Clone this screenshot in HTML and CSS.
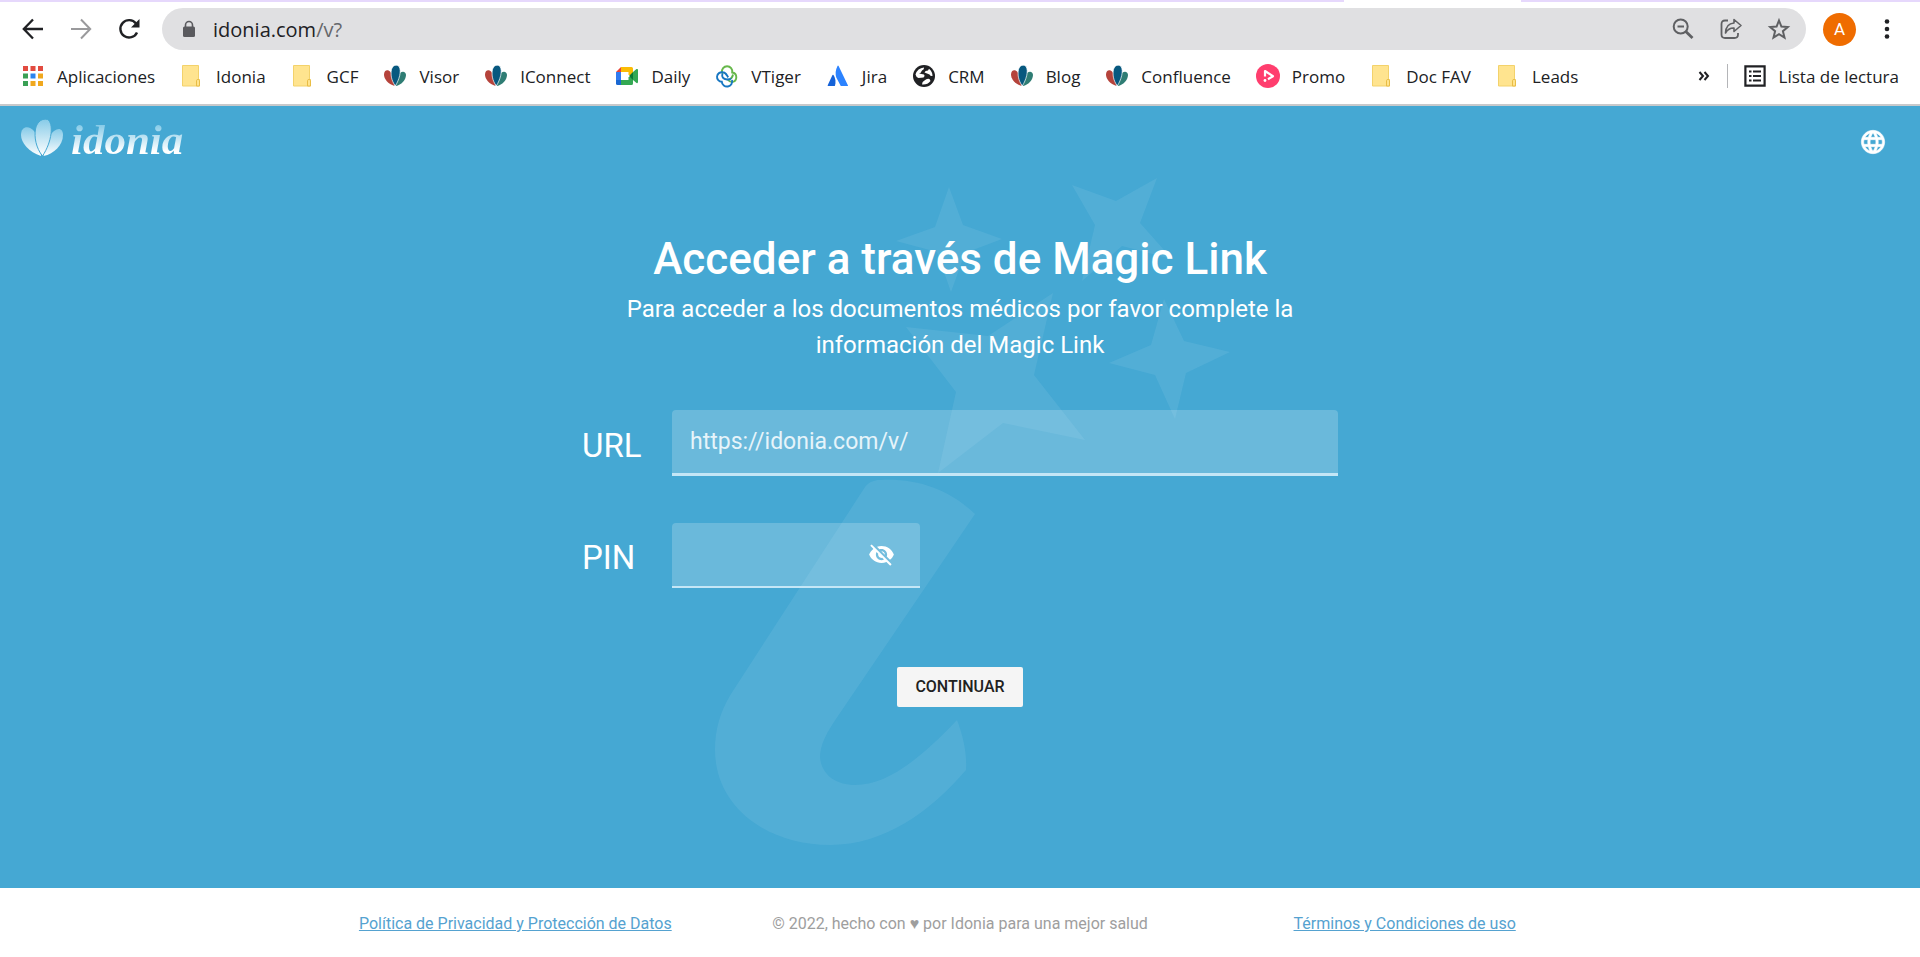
FILE: index.html
```html
<!DOCTYPE html>
<html lang="es">
<head>
<meta charset="utf-8">
<meta name="viewport" content="width=device-width, initial-scale=1">
<title>Idonia - Magic Link</title>
<link rel="stylesheet" href="styles.css">
</head>
<body>
<svg class="defs" aria-hidden="true">
  <defs>
    <linearGradient id="petal" x1="0" y1="0" x2="0" y2="1">
      <stop offset="0" stop-color="#86cbe8"/><stop offset="1" stop-color="#ffffff"/>
    </linearGradient>
    <linearGradient id="vt" x1="0" y1="1" x2="1" y2="0">
      <stop offset="0.4" stop-color="#1877c2"/><stop offset="0.6" stop-color="#5cb548"/>
    </linearGradient>
    <symbol id="folder" viewBox="0 0 24 24">
      <path d="M2.500 1.500h16v14h1v6.500h-17z" fill="#ffe48f" stroke="#f3d26b"/>
      <path d="M16.500 22v-5.500q0-1 1.500-1t1.500 1v5.500z" fill="#ffe48f" stroke="#e9bd45"/>
    </symbol>
    <symbol id="tulip" viewBox="0 0 24 24">
      <path d="M11.500 22C5 20 1 15 1 10.500C1 6 5 5 7.500 8C10 11.500 11.500 17 11.500 22z" fill="#b5433b"/>
      <path d="M13 22C12 17 14 12 17 9C20 6.500 23 8 23 11C23 16 18 21 13 22z" fill="#2f7d74"/>
      <path d="M12.300 22C8 16 7.500 10 8.500 5.500C9.500 1 14 0 16 2.500C19 7 16 16 12.300 22z" fill="#07587f" stroke="#fff" stroke-width=".7"/>
    </symbol>
  </defs>
</svg>

<div class="tabstrip"><span class="tab"></span></div>

<div class="toolbar">
  <button class="icon-btn" aria-label="Atrás"><svg viewBox="0 0 24 24"><path d="M22 12H3M12 2.500L2.800 12L12 21.500" fill="none" stroke="#202124" stroke-width="2.300"/></svg></button>
  <button class="icon-btn" aria-label="Adelante"><svg viewBox="0 0 24 24"><path d="M2 12h19M12 2.500L21.200 12L12 21.500" fill="none" stroke="#9a9a9c" stroke-width="2"/></svg></button>
  <button class="icon-btn" aria-label="Recargar"><svg viewBox="0 0 24 24"><path d="M20 15.500A8.700 8.700 0 1 1 19 6.500" fill="none" stroke="#202124" stroke-width="2.400"/><path d="M22.500 2v8.500H14z" fill="#202124"/></svg></button>
  <div class="omnibox">
    <svg class="lock" viewBox="0 0 14 18"><path d="M3.500 7V5a3.500 3.500 0 0 1 7 0v2" fill="none" stroke="#5a5a5e" stroke-width="1.600"/><rect x="1" y="6.500" width="12" height="10.500" rx="1.500" fill="#5a5a5e"/></svg>
    <span class="address">idonia.com<span class="address-path">/v?</span></span>
    <button class="icon-btn" aria-label="Zoom"><svg viewBox="0 0 24 24" fill="none" stroke="#5f6063" stroke-width="2"><circle cx="9.700" cy="9.500" r="7"/><path d="M6.500 9.500h6.500"/><path d="M14.800 14.500L21.500 21" stroke-width="2.800"/></svg></button>
    <button class="icon-btn" aria-label="Compartir"><svg viewBox="0 0 24 24" fill="none" stroke="#5f6063" stroke-width="1.800"><path d="M9 3.500H6Q2.500 3.500 2.500 7v10.500Q2.500 21 6 21h9.500Q19 21 19 17.500V16"/><path d="M15 2.500L22 8.500L15 14.500V11Q9.500 10.800 6.500 16Q7 6.500 15 6z" stroke-linejoin="round" stroke-width="1.600"/></svg></button>
    <button class="icon-btn" aria-label="Añadir a marcadores"><svg viewBox="0 0 24 24"><path d="M12 3.500L14.400 9.500L20.800 10L15.900 14.200L17.500 20.500L12 17.100L6.500 20.500L8.100 14.200L3.200 10L9.600 9.500z" fill="none" stroke="#5f6063" stroke-width="2"/></svg></button>
  </div>
  <button class="avatar" aria-label="Perfil">A</button>
  <button class="icon-btn menu" aria-label="Menú"><svg viewBox="0 0 24 24" fill="#202124"><circle cx="12" cy="4.500" r="2.300"/><circle cx="12" cy="12" r="2.300"/><circle cx="12" cy="19.500" r="2.300"/></svg></button>
</div>

<nav class="bookmarks" aria-label="Marcadores">
  <a class="bookmark" href="#"><svg viewBox="0 0 24 24"><path d="M2 2h5v5H2zM9.500 2h5v5h-5zM17 2h5v5h-5z" fill="#e24b40"/><path d="M2 9.500h5v5H2zM2 17h5v5H2z" fill="#3aa055"/><path d="M9.500 9.500h5v5h-5z" fill="#2b84ee"/><path d="M17 9.500h5v5h-5zM9.500 17h5v5h-5zM17 17h5v5h-5z" fill="#f0a81e"/></svg>Aplicaciones</a>
  <a class="bookmark" href="#"><svg><use href="#folder"/></svg>Idonia</a>
  <a class="bookmark" href="#"><svg><use href="#folder"/></svg>GCF</a>
  <a class="bookmark" href="#"><svg><use href="#tulip"/></svg>Visor</a>
  <a class="bookmark" href="#"><svg><use href="#tulip"/></svg>IConnect</a>
  <a class="bookmark" href="#"><svg viewBox="0 0 24 24"><path d="M1 8l5-5v5z" fill="#ea4335"/><path d="M6 3h10.500Q18 3 18 4.500V11h-4.500V8H6z" fill="#fbbc04"/><path d="M1 8h5v8H1z" fill="#2f7bf0"/><path d="M1 16h5v5H2.500Q1 21 1 19.500z" fill="#1967d2"/><path d="M6 16h7.500v-3H18v6.500Q18 21 16.500 21H6z" fill="#34a853"/><path d="M14 12l4-4v8z" fill="#0b7a35"/><path d="M18 8l3.500-3Q23 4.500 23 6v12q0 1.500-1.500 1L18 16z" fill="#34a853"/></svg>Daily</a>
  <a class="bookmark" href="#"><svg viewBox="0 0 24 24" fill="none" stroke-width="1.900"><path d="M7 8.500a5.200 5.200 0 1 1 10.200 0a4.800 4.800 0 0 1 0 9.500c-2.500 0-3.500-1-5-3" stroke="#67b84b"/><path d="M17 16a5.200 5.200 0 1 1-10.200 1.800a4.800 4.800 0 1 1 1-9.500c3.200 0 3.800 3 5.400 5" stroke="#1877c2"/><path d="M7.500 9q-1.500 6 4.500 6.500q5 .5 6-5" stroke="url(#vt)"/></svg>VTiger</a>
  <a class="bookmark" href="#"><svg viewBox="0 0 24 24"><path d="M11.500 2Q12 1 12.600 2L22 21.500Q22 22 21.500 22H15.200Q14.700 22 14.500 21.500L10.300 13.500Q8.500 8 11.500 2z" fill="#2c83ff"/><path d="M6.500 11Q7 10.300 7.500 11Q10.500 15.500 9 21.500Q8.800 22 8.300 22H2Q1.500 22 1.700 21.300z" fill="#1562d8"/></svg>Jira</a>
  <a class="bookmark" href="#"><svg viewBox="0 0 24 24"><circle cx="12" cy="12" r="11" fill="#202124"/><path d="M3.500 10.500Q5.500 4 12 3.500Q12.500 5.500 10 6.500Q9 9 7 9.500L12 10.500Q13.500 12 11.500 13.500L6.500 14Q4 13 3.500 10.500zM12.500 8.500Q13 6.500 16 6.500L17 4.800Q20.500 7.500 20.500 12Q18.500 12.500 17.500 10.500zM10 20.500Q10 17.500 12.500 16.500Q15 14 17.500 15L18.500 17Q15.500 21 10 20.500z" fill="#fff"/></svg>CRM</a>
  <a class="bookmark" href="#"><svg><use href="#tulip"/></svg>Blog</a>
  <a class="bookmark" href="#"><svg><use href="#tulip"/></svg>Confluence</a>
  <a class="bookmark" href="#"><svg viewBox="0 0 24 24"><circle cx="12" cy="12" r="12" fill="#ff3e6e"/><path d="M9 12.500V7l8 5.200l-5 3" fill="none" stroke="#fff" stroke-width="2.200" stroke-linejoin="round"/><circle cx="9" cy="16.500" r="1.400" fill="#fff"/></svg>Promo</a>
  <a class="bookmark" href="#"><svg><use href="#folder"/></svg>Doc FAV</a>
  <a class="bookmark" href="#"><svg><use href="#folder"/></svg>Leads</a>
  <button class="more" aria-label="Más marcadores"><svg viewBox="0 0 12 12"><path d="M1.500 2l3.500 4l-3.500 4M6.500 2l3.500 4l-3.500 4" fill="none" stroke="#202124" stroke-width="2"/></svg></button>
  <a class="bookmark reading" href="#"><svg viewBox="0 0 24 24"><path d="M2.400 2.400h19.200v19.200H2.400z" fill="none" stroke="#202124" stroke-width="2.200"/><path d="M6 6.500h2.500v2H6zM10 6.500h8v2h-8zM6 11h2.500v2H6zM10 11h8v2h-8zM6 15.500h2.500v2H6zM10 15.500h8v2h-8z" fill="#202124"/></svg>Lista de lectura</a>
</nav>

<main class="page">
  <svg class="watermark" viewBox="715 178 516 668" aria-hidden="true">
    <path d="M949 187L963 225L1002 239L965 253L951 292L937 252L896 241L935 227z"/>
    <path d="M1072 185L1116 201L1157 178L1140 223L1172 259L1122 246L1082 281L1095 225z"/>
    <path d="M906 327L988 336L1053 293L1034 375L1085 440L1003 423L938 473L956 392z"/>
    <path d="M1164 299L1184 341L1230 352L1186 373L1175 419L1155 375L1109 363L1151 345z"/>
    <path d="M865 487C869 482 874 480 880 480C918 478 950 490 975 514L840 713C826 733 820 745 820 758C822 775 836 785 855 785C888 785 921 758 957 720C963 736 967 752 966 770C930 812 884 845 830 845C766 845 715 806 715 750C715 730 720 712 731 694z"/>
  </svg>
  <header class="page-header">
    <a class="logo" href="#" aria-label="idonia">
      <svg class="logo-mark" viewBox="0 0 44 40" fill="url(#petal)"><path d="M21 38C9 34 1 25 1 17C1 8 9 7 14 13C19 20 20 29 21 38z"/><path d="M23.500 38C24 28 28 18 34 13C39 9 43 11 43 17C43 27 34 36 23.500 38z"/><path d="M22.500 38C16 30 14 19 15.500 11C17 3 23 0 27.500 1.500C34 5 32 24 22.500 38z" stroke="#45a8d3"/></svg>
      <span class="logo-name">idonia</span>
    </a>
    <button class="language" aria-label="Idioma"><svg viewBox="0 0 24 24" fill="#fff"><path d="M11.990 2C6.470 2 2 6.480 2 12s4.470 10 9.990 10C17.520 22 22 17.520 22 12S17.520 2 11.990 2zm6.930 6h-2.950c-.32-1.250-.78-2.450-1.380-3.560 1.840.63 3.370 1.910 4.330 3.560zM12 4.040c.83 1.200 1.480 2.530 1.910 3.960h-3.820c.43-1.430 1.080-2.760 1.910-3.960zM4.260 14C4.100 13.360 4 12.690 4 12s.1-1.360.26-2h3.380c-.08.66-.14 1.320-.14 2s.06 1.340.14 2H4.260zm.82 2h2.950c.32 1.250.78 2.450 1.380 3.560-1.840-.63-3.370-1.900-4.330-3.560zm2.950-8H5.080c.96-1.660 2.490-2.930 4.330-3.560C8.810 5.550 8.350 6.750 8.030 8zM12 19.960c-.83-1.200-1.480-2.530-1.910-3.960h3.820c-.43 1.430-1.080 2.760-1.910 3.960zM14.340 14H9.660c-.09-.66-.16-1.320-.16-2s.07-1.350.16-2h4.680c.09.650.16 1.320.16 2s-.07 1.340-.16 2zm.25 5.560c.6-1.110 1.060-2.310 1.380-3.560h2.950c-.96 1.650-2.490 2.930-4.330 3.560zM16.360 14c.08-.66.14-1.320.14-2s-.06-1.340-.14-2h3.380c.16.640.26 1.310.26 2s-.1 1.360-.26 2h-3.380z" stroke="#fff" stroke-width=".5"/></svg></button>
  </header>
  <form class="access">
    <h1 class="title">Acceder a través de Magic Link</h1>
    <p class="subtitle">Para acceder a los documentos médicos por favor complete la información del Magic Link</p>
    <div class="row">
      <label class="label" for="url">URL</label>
      <input class="field field-url" id="url" type="text" placeholder="https://idonia.com/v/">
    </div>
    <div class="row">
      <label class="label" for="pin">PIN</label>
      <div class="field field-pin">
        <input class="pin-input" id="pin" type="password">
        <button class="reveal" type="button" aria-label="Mostrar PIN"><svg viewBox="0 0 24 24" fill="#fff"><path d="M12 7c2.760 0 5 2.240 5 5 0 .65-.13 1.260-.36 1.830l2.920 2.920c1.510-1.260 2.700-2.890 3.430-4.750-1.730-4.390-6-7.500-11-7.500-1.400 0-2.740.25-3.980.7l2.160 2.160C10.740 7.130 11.350 7 12 7zM2 4.270l2.280 2.280.46.460C3.080 8.300 1.780 10.020 1 12c1.730 4.390 6 7.500 11 7.500 1.550 0 3.030-.3 4.380-.84l.42.42L19.730 22 21 20.730 3.270 3 2 4.270zM7.530 9.800l1.550 1.550c-.05.21-.08.43-.08.650 0 1.660 1.340 3 3 3 .22 0 .44-.03.650-.08l1.550 1.550c-.67.33-1.410.53-2.200.53-2.760 0-5-2.240-5-5 0-.79.2-1.530.53-2.200zm4.310-.78l3.150 3.150.02-.16c0-1.660-1.340-3-3-3l-.17.010z"/></svg></button>
      </div>
    </div>
    <button class="submit" type="submit">CONTINUAR</button>
  </form>
</main>

<footer class="footer">
  <div class="footer-inner">
    <a class="footer-link" href="#">Política de Privacidad y Protección de Datos</a>
    <span>© 2022, hecho con ♥ por Idonia para una mejor salud</span>
    <a class="footer-link" href="#">Términos y Condiciones de uso</a>
  </div>
</footer>
</body>
</html>
```
FILE: styles.css
```css
* { box-sizing: border-box; }

body {
  margin: 0;
  min-height: 100vh;
  display: flex;
  flex-direction: column;
  background: #fff;
  font-family: Roboto, "Liberation Sans", sans-serif;
}

button {
  padding: 0;
  border: 0;
  background: none;
  font: inherit;
  cursor: pointer;
}

svg { display: block; }
.defs { position: absolute; width: 0; height: 0; }

/* Browser frame */
.tabstrip {
  height: 2px;
  padding-left: 70%;
  background: #e6d8fc;
}
.tab {
  display: block;
  width: 177px;
  height: 2px;
  background: #fff;
}

.toolbar {
  display: flex;
  align-items: center;
  gap: 24px;
  padding: 6px 21px 0;
}
.icon-btn, .icon-btn svg { width: 24px; height: 24px; }
.icon-btn { flex: none; }

.omnibox {
  flex: 1;
  display: flex;
  align-items: center;
  gap: 24px;
  height: 42px;
  margin: 0 -7px 0 -3px;
  padding: 0 15px 0 20px;
  border-radius: 21px;
  background: #e0e0e2;
}
.lock { width: 14px; height: 18px; }
.address {
  flex: 1;
  margin-left: -7px;
  font: 20px "Open Sans", "Noto Sans", sans-serif;
  color: #202124;
}
.address-path { color: #66676b; }

.avatar {
  width: 33px;
  height: 33px;
  border-radius: 50%;
  background: #ef6c00;
  color: #fff;
  font-size: 17px;
}
.menu { margin-left: -5px; }

.bookmarks {
  display: flex;
  align-items: center;
  gap: 25px;
  height: 56px;
  padding: 0 21px 2px;
  border-bottom: 2px solid #c8c9cb;
}
.bookmark {
  display: flex;
  align-items: center;
  gap: 12px;
  font: 17px "Open Sans", "Noto Sans", sans-serif;
  color: #202124;
  text-decoration: none;
  white-space: nowrap;
}
.bookmark svg { width: 24px; height: 24px; }
.more { margin-left: auto; margin-right: -8px; }
.more svg { width: 12px; height: 12px; }
.reading {
  height: 24px;
  padding-left: 15px;
  border-left: 1px solid #b4b5b8;
}

/* Page */
.page {
  position: relative;
  z-index: 0;
  flex: 1;
  background: #45a8d3;
  color: #fff;
}
.watermark {
  position: absolute;
  z-index: -1;
  top: 72px;
  left: calc(50% - 245px);
  width: 516px;
  height: 668px;
  fill: rgba(136, 200, 228, .2);
}

.page-header {
  display: flex;
  align-items: center;
  justify-content: space-between;
  height: 72px;
  padding: 0 33px 8px 20px;
}
.logo {
  display: flex;
  align-items: center;
  gap: 7px;
  text-decoration: none;
}
.logo-mark { width: 44px; height: 40px; }
.logo-name {
  padding-top: 4px;
  background: linear-gradient(#86cbe8 20%, #fff 80%);
  background-clip: text;
  -webkit-background-clip: text;
  color: transparent;
  font: italic bold 43px/40px "Liberation Serif", serif;
}
.language { padding-top: 8px; }
.language svg { width: 28px; height: 28px; }

.access {
  display: flex;
  flex-direction: column;
  gap: 47px;
  max-width: 756px;
  margin: 0 auto;
  padding: 54px 0 48px;
}
.title {
  margin: 0 0 -42px;
  font-size: 44px;
  font-weight: 500;
  line-height: 54px;
  text-align: center;
}
.subtitle {
  max-width: 700px;
  margin: 0 auto;
  font-size: 24px;
  line-height: 36px;
  text-align: center;
}
.row { display: flex; align-items: center; }
.label {
  width: 90px;
  padding-top: 4px;
  font-size: 33px;
}
.field {
  height: 66px;
  border: 0;
  border-bottom: 3px solid #c4e6f6;
  border-radius: 4px 4px 0 0;
  background: rgba(255, 255, 255, .2);
  color: #fff;
}
.field-url {
  flex: 1;
  min-width: 0;
  padding: 0 18px;
  font: 23px Roboto, sans-serif;
}
.field-url::placeholder { color: #e6f4fa; opacity: 1; }
.field-pin {
  display: flex;
  align-items: center;
  width: 248px;
  height: 65px;
  padding: 0 25px 0 18px;
  border-bottom-width: 2px;
}
.pin-input {
  flex: 1;
  min-width: 0;
  border: 0;
  outline: 0;
  background: none;
  color: #fff;
  font: 23px Roboto, sans-serif;
}
.reveal svg { width: 27px; height: 27px; }
.submit {
  align-self: center;
  margin-top: 32px;
  height: 40px;
  padding: 0 18px 2px;
  border-radius: 2px;
  background: #f5f5f5;
  color: #212121;
  font-size: 16px;
  font-weight: 500;
}

.footer {
  padding: 25px 0 23px;
  font-size: 16px;
  line-height: 21px;
  color: #9e9e9e;
}
.footer-inner {
  display: grid;
  grid-template-columns: repeat(3, 1fr);
  max-width: 1334px;
  margin: 0 auto;
  text-align: center;
}
.footer-link { color: #55a2d0; }
```
